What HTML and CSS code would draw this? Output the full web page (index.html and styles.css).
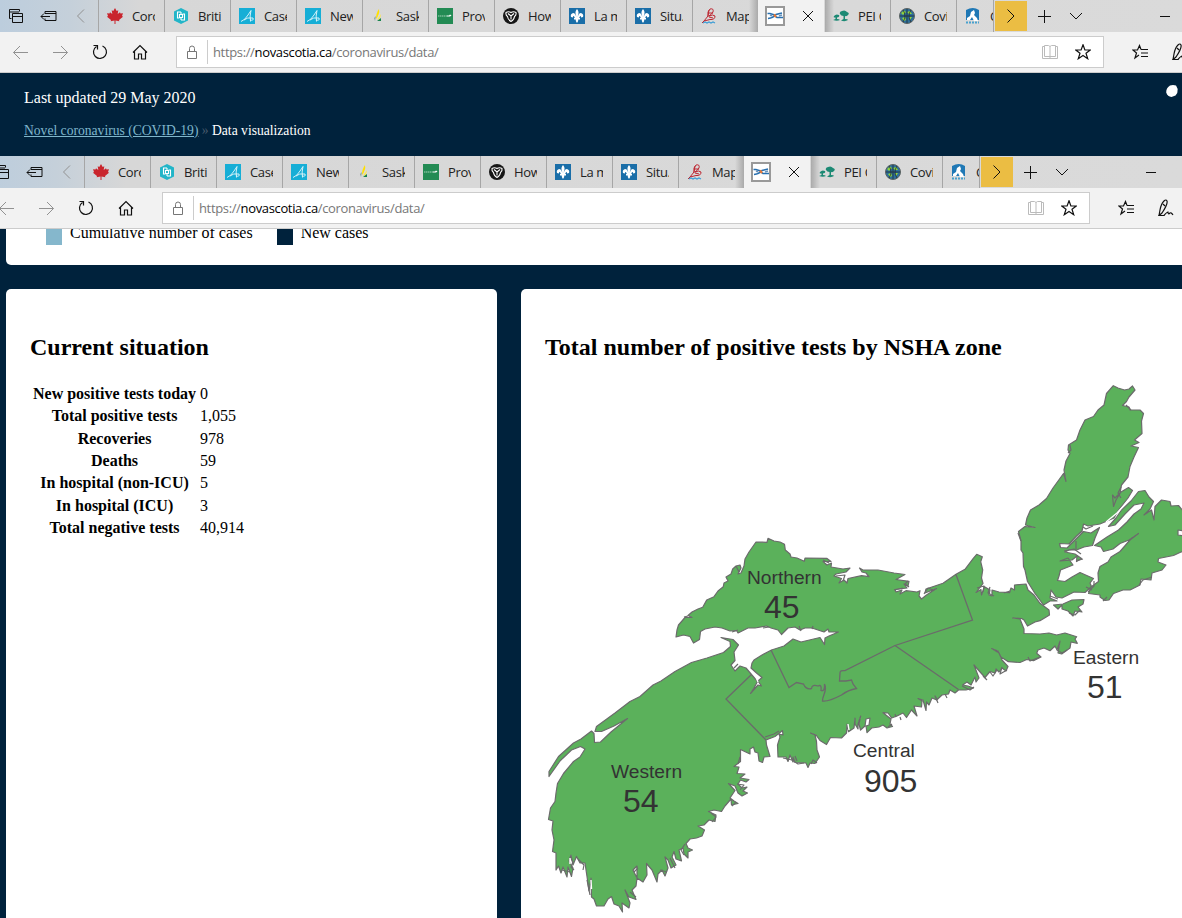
FILE: index.html
```html
<!DOCTYPE html>
<html lang="en">
<head>
<meta charset="utf-8">
<title>Data visualization</title>
<link rel="stylesheet" href="styles.css">
<script src="chrome.js" defer></script>
</head>
<body>
<div class="browser"></div>
<header class="masthead">
  <p class="updated">Last updated 29 May 2020</p>
  <p class="crumbs"><a href="#">Novel coronavirus (COVID-19)</a> <span class="sep">»</span> Data visualization</p>
  <svg class="dot" viewBox="0 0 14 14"><path d="M5 1.500Q8 .5 11 1.500L12.700 5Q13 9 10.500 11.500L6.500 13Q2.500 12.500 1.200 8.500Q1 4 5 1.500Z" fill="#fff"/></svg>
</header>
<div class="browser shifted"></div>
<main>
  <section class="legend">
    <span class="swatch light"></span><span class="key">Cumulative number of cases</span>
    <span class="swatch dark"></span><span class="key">New cases</span>
  </section>
  <div class="cards">
    <section class="card situation">
      <h2>Current situation</h2>
      <table>
        <tr><th>New positive tests today</th><td>0</td></tr>
        <tr><th>Total positive tests</th><td>1,055</td></tr>
        <tr><th>Recoveries</th><td>978</td></tr>
        <tr><th>Deaths</th><td>59</td></tr>
        <tr><th>In hospital (non-ICU)</th><td>5</td></tr>
        <tr><th>In hospital (ICU)</th><td>3</td></tr>
        <tr><th>Total negative tests</th><td>40,914</td></tr>
      </table>
    </section>
    <section class="card zones">
      <h2>Total number of positive tests by NSHA zone</h2>
      <svg class="map" viewBox="545 375 637 543">
        <g class="land">
          <!-- mainland -->
          <path d="M676 637L677 630 678.500 625 682 621 685 617.500 692 617.500 688 615.500 692 612 698 609 702.700 607.300 706.700 600 714 596.700 718 591 723.300 586.700 724 583 728 581 726 577 731 574 732.700 569 736 566 740 565 741 568 738 574 741 573 744 566 745 559 749 552 756 542 767 542.300 768 538.300 774 541 780 542 784.500 544.300 785.300 550 790 554 791 557 797 558 804.300 561.300 805 558 826.700 558.300 831 561.500 823 561.500 827 565 831.500 563 831 567 843 569 850 568 846 572 836 574 834 576 841.500 578.500 839 583 844 580 847 583 848 578.500 861.500 575.700 869 576.700 866 573 862 572 859.500 568 863 570 878 570 894 573 905 574.500 896 579.500 909 581.300 908 586 904 584 907 588 895 589.500 896 592 902 590 900 594 906 590.700 917 592 920 590.700 919 596 921.500 599 926.500 595 936.500 588.500 925 593 926 589 943 583.300 956 574.300 965 569.300 973.300 558.300 976.700 554.300 982.300 556.700 980.700 561.700 982.700 570 981.500 578 983 583.500 976 592.500 981 589.500 981.500 595 984.500 586.700 990 590 989 595 992 596 992 590 999 592 1009.500 592.700 1011 588 1014.500 590 1014.500 585 1026 584 1028 590 1034 595 1040 603.300 1049 610 1049.500 615 1040 620.700 1035 622 1027.500 626 1024 620 1021.500 618.500 1012.700 618 1020 619 1024 629 1024 633.500 1040 634 1049 633 1056.700 635 1065 633 1076.700 636.700 1075 639 1077.300 643.300 1071 642 1070 648 1061.700 654 1058 653 1060 641 1057 650 1055 646 1050 650.700 1044 648 1038 650 1036.700 653.300 1041 657 1033.500 660.700 1026.700 659.500 1020 662.500 1008.300 661.700 1001 657 998 651 991.700 648.500 999 653 1002 660 1008 666.500 1006 671 1002 668 999 672 996 669 995 673 990 671.500 985 677.500 981 673 974 665 979 678 976 682 975 677 971 685 967 682 962.500 685 968 686 973.500 688 966 690 958.500 690 955 693 950 690 948.500 694 942 695 936.700 700 932 698 929 705 926.500 702 926 710.500 923 700 918 698.500 922 701 921.500 707 914 706 917 716 911.500 710 906.500 717.500 903 713 897 716 891.700 718 888 713 883 712.700 891 719 890 724 892.500 726.500 887 728 883 725 879 727 871.700 728 867 732.700 866 726 869 725 870 718 866 719 865 726 860.500 730 859 724 860.700 716 858 724 858 729 855 724 855 718 854 728 848.500 731.700 847 724 846.500 733 841.500 738 830.500 737.500 826.500 744.500 820 740.500 816 735 810.500 733 815 735 816.500 741.500 817 750 819.500 757 815 763.500 810 763 808 767.500 806 763 795 762.500 793 757 793 762 790 755 788 761.500 786 757 778 757 777.500 745 780 737 779 734 783 735 782.500 730.500 775 736.500 766 740 766.500 745 770 756.500 764 757 762.500 762.500 759 761 758 753 755 752 753.500 747 750 749 750 754 740.500 749.500 740.500 761.500 734 766.500 739 767 737 773.500 745 774 740 778 749 779.500 746 782 740.500 780 738 784 742 788 747 787 743 791 747.500 793 742 796 738 793 735 786 728.500 783.500 735 790.500 730 798 734 801 738 803.500 731.500 805 731 799 725 806 721.500 811.500 714 810 708.500 811.500 716 815 715 821.500 709 820 704 825 698 826 704.500 830 702 836 696.500 838 690 839 686 843.500 688 848 692.500 850 688 852 688 858 684 854 683 848 679 850 681.500 861 676 859 674 851.500 672 857 676 865 671 868 668 860 665 857 668 868 665 876 662 870 658 874 657 882 652 870 646.500 863.500 647 875 643 882 637 878 637 866 633 870 637 878 636 886 632 890 636 899.500 629 897 625 890 630 903 629 908 622 903 622.500 912 619 906 614 904 611.500 896.500 608 899 604 906 596.500 906 594 899 591.500 897 591 878 589 891 587 876.500 585 863 580 863 576.500 856.500 573 865 571 855 569 861 573 868 571.500 876.500 568 867 567 877 563 867 561 873 558.500 866 556 870 556 853 552.500 851.500 554 840 552 830 553 821 548.500 819.500 550.500 808 555 801.500 556 793 557.500 783.500 563.500 773.500 573.500 761.500 580 757 585 749 580.500 746.500 571.500 750 560 761 549 776.500 549 771.500 558.500 756.500 573.500 743 581 739 591.500 731 594 733.500 594.500 742.500 600.500 742 611 732 627.500 718.500 614 726 601.500 731.500 595 731.500 596.500 726.500 615 713 630 701.500 640 696.500 653 685 661 681 675 671.500 691.500 662.500 707 658 723.500 652.500 730.500 646.500 730 641.500 721 637.500 733 639.500 738.500 645 734 652 735 660.500 731 665 735 671 740 666 746 668 751.500 674.500 757.500 681.500 754 688 750.500 693.500 758 685 761.500 686 758 681 762 677.500 756.500 673 751 668 752 663 754 660 762 655 771.500 650 784 646 793 639 801 642 820 637.500 824.500 644.500 825 638 829 636 838.500 632 829 632 828 629 824 632 812 628 805 628 800 630 795 627 788 628 781.500 634.500 778 630 771 628 766.500 626 755 628 748 628 738 633 736.500 630.500 730 631 722 628 715 627 705 629 700.500 631.500 699.500 639.500 693.500 643 690 636.500 683.500 635Z"/>
          <!-- Cape Breton, west -->
          <path d="M1113.300 385.700L1118 388 1124.500 390 1129 389 1132.500 386 1135 390 1129 397 1126.500 401.500 1122.500 405.500 1129 407 1130 410 1140 410 1143.500 413.500 1141.500 421 1142 433.500 1134.500 440 1139 442.500 1131 446 1138.500 447.500 1134 457 1130 466.500 1128 477 1121.500 485 1120 493.500 1116 500 1113.500 506.500 1112.500 495 1115 498 1121 492 1128.500 487.500 1132.500 490.500 1128 498 1118.500 510 1114 518 1107 521 1100 524 1088 526 1083.500 524 1082 531 1076.500 536 1069 544 1059.500 543.500 1060.500 547.500 1067 548 1074.500 540.500 1083.500 531.500 1091 533 1099.500 527.500 1095 538 1092.500 545.500 1084 547 1076.500 550 1069 550 1065 552 1075 554 1081.500 558.500 1076.500 561.500 1077 556 1072 560 1060 561 1068 558 1073 565 1060.500 570 1059 576 1057.500 580.500 1065 581.500 1072 577 1080 572.500 1093.500 578.500 1090 583 1091.500 586.500 1085 592.500 1074 592 1062 598 1056 597 1051 590 1050 598 1057 601 1050 601 1043.500 605 1035 593.500 1027.500 581.500 1025 570 1023.500 566.500 1023 553 1021 550 1021 541 1018.500 531.500 1025 526.500 1035 527.500 1025.500 525 1027 518 1030.500 510 1039 505 1046.500 498.500 1053 488 1063.500 473.500 1066 481.500 1064 470 1066 461 1070 453.500 1068 450 1068.500 445 1076.500 440 1080 430 1085 420 1093.500 416.500 1098 410 1104 405 1106.500 393.500Z"/>
          <!-- Cape Breton, east -->
          <path d="M1108.500 526.500L1116 518 1121.500 510 1131 501 1138.500 491.500 1145 490.500 1149 497 1153.500 501.500 1150 509 1144 515 1151.500 510 1154 520 1155 506.500 1161.500 500 1170 501.500 1171 506 1178.500 505.500 1184 512 1190 518V532L1178 530 1178 535 1190 537V551L1181 552 1173.500 555.500 1158.500 558.500 1158 562 1166 565 1162 570 1152 573 1151 580 1141 579 1140 585 1130 590 1123 590 1113.500 593.500 1109 600 1105 600.500 1100 597 1100 595 1088.500 593.500 1091 587 1098.500 581.500 1098 573 1100 566.500 1108 562 1111 557 1120 551.500 1130 540 1138.500 533.500 1129 540 1120 543.500 1113 549 1103.500 551.500 1101 547 1094.500 545.500 1107 537 1118.500 530 1127 522 1134 514 1141 509 1144 503 1134 505 1125 514 1115 525Z"/>
          <!-- Isle Madame -->
          <path d="M1053.500 605L1063 604 1072 600 1084 599.500 1083 604 1078 607 1082 612 1075 611 1073 616 1068 611 1062 609 1062 605 1058 609Z"/>
        </g>
        <!-- small coves and inlets -->
        <path class="coves" d="M765 737L774 734 779 731M892 724L888 727M896 717L895 714M900 717L901 720M937 699L935 696 938 703M945 694L947 698M962 686L970 690 974 687M983 676L987 680M990 672L993 676 997 670M1002 667L1000 674 1007 670M1040 657L1030 661 1028 657M1057 650L1062 653 1067 650M783 758L792 760 798 764 804 763M795 756L797 761M811 764L813 760 817 763M740 757L738 764M737 784L744 785 740 790M736 802L732 806M711 813L716 817 712 822M685 844L681 850 684 855M670 858L675 868M660 870L667 872M638 868L634 872M630 892L636 897M570 857L573 862 571 867 574 870M578 859L584 865 583 870M587 880L590 895M562 870L570 872M1018 533L1021 541M1070 445L1071 450 1068 453M1121 487L1118 493 1121 498M1126 405L1131 410M1076 541L1076 549M1064 551L1074 549 1081 554M1083 527L1086 529 1093 526M1076 561L1083 559M1088 592L1094 586 1094 581M1152 577L1143 580 1139 585M1103 601L1107 597M1050 596L1058 599M1069 613L1075 615 1080 610M1086 587L1092 590M977 588L984 586 983 592M990 587L988 593 994 596M1004 593L1010 591M924 594L928 588 933 590M908 581L905 584 909 587M894 590L903 588M836 576L845 575 843 581M823 560L829 563M736 566L739 572M684 617L688 616M732 632L738 630M763 628L769 627M799 626L801 631M812 629L813 626M734 668L738 664"/>
        <path class="water" d="M756 677L758 682M848 724L849 730M570 858V864M591 880L591.500 889M1106 522L1117 513 1130 499M562 761L572 753"/>
        <g class="bounds">
          <path d="M956 574.500L972.500 620 895 645.500 845 670.700Q840 670 840 673L839.500 681 846 681 851.500 680 853 684 856.500 688.500Q848 690 841.500 695Q828 702 822.500 701C822 696 828 690 824.500 684Q825 692 821 690.500Q822 684 818 686Q812 684 811.500 688.500Q806 690 803.500 684L796.500 682.500 789 687.500 771 650"/>
          <path d="M895 645.500L958.500 689.500M751.500 674.500L726 699 766 740"/>
        </g>
        <g class="name"><text x="747" y="584">Northern</text><text x="611" y="778">Western</text><text x="853" y="757">Central</text><text x="1073" y="664">Eastern</text></g>
        <g class="count"><text x="764" y="618">45</text><text x="623" y="812">54</text><text x="864" y="792">905</text><text x="1087" y="698">51</text></g>
      </svg>
    </section>
  </div>
</main>
</body>
</html>
```

FILE: chrome.js
```js
// Builds the tab strip and address bar for each browser frame.
const svg = (w, h, body, cls = '') =>
  `<svg class="${cls}" width="${w}" height="${h}" viewBox="0 0 ${w} ${h}">${body}</svg>`;
const icon = (body) => svg(16, 16, body, 'favicon');

const alberta = '<path fill="#16aed6" d="M0 0h16v16H0z"/><path d="M2 13.500Q6 12 9 7L12 2.500Q10.500 8 11.500 13.500M5 12Q8 9 14 10M14 10Q15 13 11 12" fill="none" stroke="#e8f8fc" stroke-width=".9"/>';
const quebec = '<path fill="#1a6ea8" d="M0 0h16v16H0z"/><path d="M8 1Q10.500 4 9 7L8.800 9Q9.500 5 12 5Q15 6 14 9L12 9.500 12 8Q10.500 8 10.200 10H11V11.500H9.300Q9.500 13 8 15Q6.500 13 6.700 11.500H5V10H5.800Q5.500 8 4 8V9.500L2 9Q1 6 4 5Q6.500 5 7.200 9L7 7Q5.500 4 8 1Z" fill="#fff"/>';

const tabs = [
  ['Coro', '<path fill="#c9252d" d="M8 0 9.700 3 11.300 2.300 10.700 6 13 4.200 13.500 5.500 16 5.300 15 8 16 8.800 12 12 12.300 13.200 8.500 12.600V16H7.500V12.600L3.700 13.200 4 12 0 8.800 1 8 0 5.300 2.500 5.500 3 4.200 5.300 6 4.700 2.300 6.300 3Z"/>'],
  ['Briti', '<path fill="#22b5c8" d="M8 0 15 3.500V12.500L8 16 1 12.500V3.500Z"/><path d="M8 4H4.500V10H6.500M8 12H11.500V6H9.500M6.500 6.500H9.500V9.500H6.500ZM8 4V6M8 10V12" fill="none" stroke="#fff" stroke-width="1.100"/>'],
  ['Case', alberta],
  ['New', alberta],
  ['Sask', '<path d="M5 11Q5 5 8 1Q9 6 5 11Z" fill="#ffe000"/><path d="M6 12 10 6 9 11Z" fill="#ffe94a"/><path d="M6 13 10 10 10 13Z" fill="#18834d"/><path d="M3 10 5 8 4 13Z" fill="#8aa69d"/>'],
  ['Prov', '<path fill="#238b54" d="M0 0h16v16H0z"/><path d="M1 8H10" stroke="#a5d2b7" stroke-width="1.200" stroke-dasharray="1.500 .5"/><path d="M10 7.600H12L13 6.500 14.500 7.500 13 8.600H10Z" fill="#fff"/>'],
  ['How', '<circle cx="8" cy="8" r="8" fill="#171717"/><path d="M3 4.500Q5.500 3 8 4.500Q10.500 3 13 4.500Q13.500 7 11.500 8.500Q11 12 8 13.500Q5 12 4.500 8.500Q2.500 7 3 4.500ZM5 5.500 8 8 11 5.500M8 8V11.500" fill="none" stroke="#fff" stroke-width="1.100"/>'],
  ['La m', quebec],
  ['Situ.', quebec],
  ['Map', '<path d="M7 9Q6 3 9 1Q13 0 12 4 11 6 8 8Q12 6 14 8Q14 12 9 11.500L3 13 1 15M8 2 7 8 3 13M8 5H12M8 9 12 10" fill="none" stroke="#bd2530" stroke-width="1"/><path d="M2 15 4 14 6 15 8 14 10 15 12 14 14 15" fill="none" stroke="#3f9ed6" stroke-width="1.300"/>'],
  ['active'],
  ['PEI C', '<path d="M7 6Q6 3.500 9 3Q12 1.500 14 4Q17 5 15 7Q14 8.500 12 8V11Q15 11 15 12Q12 14 8 12.500L10.500 11V8Q8 8 7 6ZM1 8Q3 5.500 6 7Q7 9 4 9.500V11Q6 11 7 12Q4 13.500 0 12L2.500 11V9.500Q0 10 1 8Z" fill="#1c8974"/>'],
  ['Covi', '<circle cx="8" cy="8" r="7.500" fill="#2c6f9c" stroke="#5b6260"/><path d="M2 5 5 2.500 7 4 4 7ZM8 4 11 3 13 6 10 6ZM3 10 6 9 7 12 5 13ZM10 9 13 9 11 12Z" fill="#8ed43c"/><path d="M1 8H15M8 1V15M4 2Q8 8 4 14M12 2Q8 8 12 14" stroke="#222" stroke-width=".7" fill="none"/>'],
  ['C', '<path fill="#1f78b5" d="M1 2Q8-2 14 2V12H1Z"/><path d="M2 10 5 8 6 4 9 2 10 5 9 7 12 10 13 13H9L7 9 5 12H2Z" fill="#fff"/><path d="M1 14.500H14" stroke="#48a1ce" stroke-width="2" stroke-dasharray="2 1"/>']
];

const tabHtml = tabs.map(([label, art], i) => {
  if (label === 'active') {
    return `<div class="tab active">${svg(20, 20, '<path d="M1 1H19V19H1Z" fill="#fff" stroke="#999" stroke-width="2"/><path d="M2.500 7.500H5Q9 8 12 11.500H18M3 12.500Q8 12 11 8.500L17 7" stroke="#2870b0" stroke-width="1.500" fill="none"/><path d="M5 9 7 10M14 10 17 9" stroke="#6a93bb" stroke-width="1.500"/><path d="M9 8.500 11 11" stroke="#e67735" stroke-width="2.200"/>')}${svg(12, 12, '<path d="M1 1 11 11M11 1 1 11" class="ink"/>', 'close')}</div>`;
  }
  const cls = i === 11 ? ' after' : i === 9 ? ' before' : i === 13 ? ' cut' : '';
  return `<div class="tab${cls}">${icon(art)}<span class="label">${label}</span></div>`;
}).join('');

const star = 'M8 .8 9.900 6H15.300L11 9.300 12.700 14.700 8 11.500 3.300 14.700 5 9.300.7 6H6.100Z';
const frame = `
<div class="strip">
  <div class="cell">${svg(16, 16, '<path d="M3.500 10.500H1.500V1.500H11.500V3.500M2 4H11M4.500 5.500H14.500V14.500H4.500ZM4.500 8.500H14.500" class="ink"/>')}</div>
  <div class="cell">${svg(17, 16, '<path d="M5 5.500V3.500H16V12.500H5V10.500M5 5.500H16M1 8.500H10M4 5.500 1 8.500 4 11.500" class="ink"/>')}</div>
  <div class="cell dim">${svg(10, 16, '<path d="M9 1.500 2.500 8 9 14.500" class="ink"/>')}</div>
  <div class="tabs">${tabHtml}</div>
  <div class="cell scroll">${svg(10, 16, '<path d="M1.500 1.500 8 8 1.500 14.500" class="ink"/>')}</div>
  <div class="cell">${svg(14, 14, '<path d="M7.500 1V14M1 7.500H14" class="ink"/>')}</div>
  <div class="cell">${svg(14, 10, '<path d="M1 2 7 8 13 2" class="ink"/>')}</div>
  <div class="cell minimise">${svg(10, 10, '<path d="M0 5.500H10" class="ink"/>')}</div>
</div>
<div class="toolbar">
  <div class="button dim">${svg(16, 16, '<path d="M16 8.500H1.500M8 2 1.500 8.500 8 15" class="ink"/>')}</div>
  <div class="button dim">${svg(16, 16, '<path d="M1 8.500H15.500M9 2 15.500 8.500 9 15" class="ink"/>')}</div>
  <div class="button">${svg(16, 16, '<path d="M10.500 2A6.500 6.500 0 1 1 4.500 2.500M1.500 1.500H5.500V5.500" class="ink thick"/>')}</div>
  <div class="button">${svg(16, 16, '<path d="M1 8.500 8 1.500 15 8.500M2.500 7.500V15H6.500V10H9.500V15H13.500V7.500" class="ink thick"/>')}</div>
  <div class="address">
    ${svg(12, 14, '<path d="M1.500 6.500H10.500V13.500H1.500ZM3.500 6V3.500Q3.500 1 6 1T8.500 3.500V6" fill="none" stroke="#767676"/>', 'lock')}
    <span class="url">https://<b>novascotia.ca</b>/coronavirus/data/</span>
    ${svg(16, 16, '<path d="M2.500 2.500H.5V14.500H15.500V2.500H13.500M2.500 1.500H6.500L8 2.500 9.500 1.500H13.500V12.500H2.500ZM8 2.500V14" fill="none" stroke="#bbb"/>', 'book')}
    ${svg(16, 16, `<path d="${star}" class="ink thick"/>`, 'star')}
  </div>
  <div class="button fav">${svg(17, 16, '<path d="M9 5.500 7.500 1.500 5.500 6H.8L4.500 9 3 14 7 11M9 5.500H16M9 9H16M9 12.500H16" class="ink thick"/>')}</div>
  <div class="button">${svg(16, 18, '<path d="M1 16.500 2 11Q3 5 6 2Q8 0 9 2Q10 5 4 14L1 16.500H6Q9 13 10 13Q10 16 12 14Q13 13 15 16M5 5 7 7" class="ink thick"/>')}</div>
</div>`;

document.querySelectorAll('.browser').forEach((el) => { el.innerHTML = frame; });
```

FILE: styles.css
```css
* { box-sizing: border-box; }
html, body { height: 918px; overflow: hidden; }
body { margin: 0; background: #00223c; font: 16px "Liberation Serif", "Times New Roman", serif; color: #000; }
svg { display: block; flex: none; }
.ink { fill: none; stroke: #111; stroke-width: 1; }
.thick { stroke-width: 1.2; }
.dim .ink { stroke: #929292; }

/* Browser frame */
.browser { width: 1196px; height: 73px; background: #f2f2f2; border-bottom: 1px solid #ccc; font-family: "Open Sans", "Noto Sans", sans-serif; }
.shifted { margin-left: -14px; }
.strip { display: flex; height: 32px; background: linear-gradient(90deg, #bccddd 0, #c5d0da 70px, #d7d7d7 140px, #dadada 100%); }
.cell { flex: none; width: 32px; height: 32px; display: flex; align-items: center; justify-content: center; }
.tabs { flex: none; display: flex; width: 896px; margin: 0 1px 0 2px; overflow: hidden; }
.tab { flex: none; width: 66px; display: flex; align-items: center; padding-left: 8px; border-left: 1px solid #a6a6a6; }
.tab .label { width: 23px; margin-left: 9px; overflow: hidden; white-space: nowrap; font-size: 13px; letter-spacing: -.35px; line-height: 18px; padding-bottom: 1px; color: #222; }
.tab.active { border: 0; background: #f2f2f2; padding-left: 7px; }
.tab.active .close { margin-left: 17px; }
.tab.after { border-color: transparent; background: linear-gradient(90deg, #aaa 0, transparent 9px); }
.tab.before { background: linear-gradient(270deg, #aaa 0, transparent 9px); }
.tab.cut { width: 38px; border-right: 1px solid #a6a6a6; }
.tab.cut .label { flex: none; width: 3px; }
.scroll { height: 30px; margin: 1px 1px 0 0; background: #ebbd43; }
.minimise { margin-left: 57px; }
.toolbar { display: flex; align-items: center; height: 40px; }
.button { flex: none; width: 40px; display: flex; justify-content: center; }
.address { flex: none; width: 928px; height: 32px; margin-left: 16px; padding: 0 12px 0 9px; display: flex; align-items: center; background: #fff; border: 1px solid #ccc; }
.url { height: 24px; line-height: 25px; margin-left: 9px; padding-left: 5px; border-left: 1px solid #ccc; font-size: 13px; letter-spacing: -.35px; color: #777; }
.url b { font-weight: 400; color: #000; }
.book { margin-left: auto; }
.star { margin-left: 17px; }
.fav { margin-left: 16px; }

/* Page header */
.masthead { position: relative; height: 83px; padding: 16px 24px 0; color: #fff; }
.masthead p { margin: 0; }
.updated { line-height: 18px; }
.crumbs { padding-top: 15px; font-size: 13.6px; line-height: 18px; }
.crumbs a { color: #7fb6cb; }
.sep { color: #46596b; }
.dot { position: absolute; left: 1165px; top: 11px; width: 14px; height: 14px; }

/* Dashboard */
main { padding-left: 6px; }
.legend { display: flex; height: 36px; padding-left: 40px; overflow: hidden; background: #fff; border-radius: 0 0 0 5px; }
.swatch { width: 16px; height: 16px; }
.light { background: #85b7cc; }
.dark { background: #00223c; margin-left: 24px; }
.key { margin: -5px 0 0 8px; line-height: 18px; }
.cards { display: flex; gap: 24.5px; padding-top: 24.4px; }
.card { flex: none; height: 640px; padding: 24px; background: #fff; border-radius: 5px 5px 0 0; }
.situation { width: 490.5px; }
.zones { width: 661px; padding-right: 0; border-top-right-radius: 0; overflow: hidden; }
h2 { margin: 20px 0 20.4px; font-size: 24px; line-height: 28px; }
td, th { line-height: 18.4px; }
.map { width: 637px; height: 543px; margin-top: -6.8px; }
.land { fill: #5bb15b; stroke: #6b6b6b; stroke-width: 1.2; stroke-linejoin: round; }
.coves { fill: none; stroke: #6b6b6b; stroke-width: 1.2; stroke-linejoin: round; }
.water { fill: none; stroke: #fff; stroke-width: 1.4; }
.bounds { fill: none; stroke: #6b6b6b; stroke-width: 1.3; }
.map text { font-family: "Liberation Sans", Arial, sans-serif; fill: #333; }
.name { font-size: 19.2px; }
.count { font-size: 32px; }
```
